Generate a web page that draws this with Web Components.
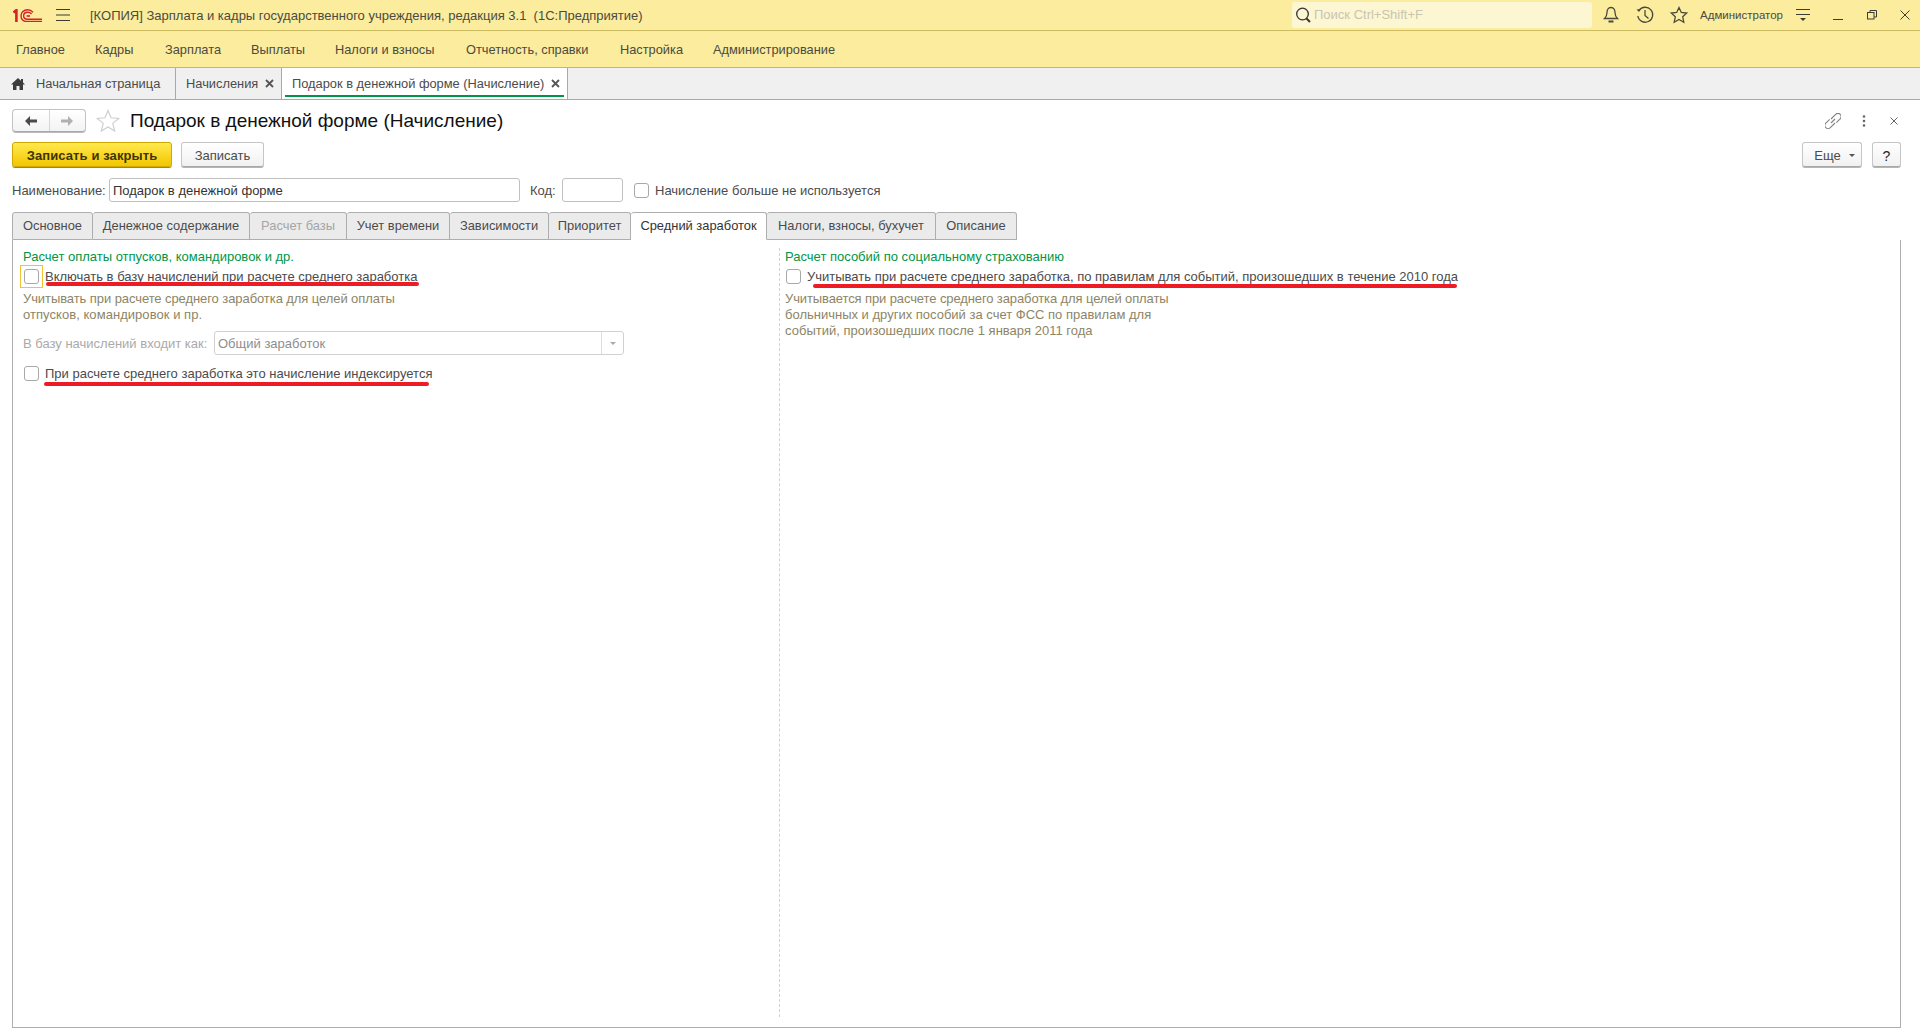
<!DOCTYPE html>
<html lang="ru"><head><meta charset="utf-8"><title>1С</title>
<style>
html,body{margin:0;padding:0;height:1033px;width:1920px;overflow:hidden;background:#fff}
body{display:flex;flex-direction:column;font:13px/16px "Liberation Sans",Arial,sans-serif;color:#4b4b4b}
</style></head><body>
<x-titlebar></x-titlebar>
<x-menubar>
<x-menuitem style="width:79px">Главное</x-menuitem><x-menuitem style="width:70px">Кадры</x-menuitem><x-menuitem style="width:86px">Зарплата</x-menuitem><x-menuitem style="width:84px">Выплаты</x-menuitem><x-menuitem style="width:131px">Налоги и взносы</x-menuitem><x-menuitem style="width:154px">Отчетность, справки</x-menuitem><x-menuitem style="width:93px">Настройка</x-menuitem><x-menuitem>Администрирование</x-menuitem>
</x-menubar>
<x-pagetabs>
<x-pagetab style="width:176px" home>Начальная страница</x-pagetab>
<x-pagetab style="width:106px" closable>Начисления</x-pagetab>
<x-pagetab style="width:286px" closable active>Подарок в денежной форме (Начисление)</x-pagetab>
</x-pagetabs>
<x-form>
<x-headrow slot="head">Подарок в денежной форме (Начисление)</x-headrow>
<x-cmdrow slot="cmd">
  <x-btn primary style="width:160px">Записать и закрыть</x-btn>
  <x-btn style="width:83px;margin-left:9px">Записать</x-btn>
  <x-spacer></x-spacer>
  <x-btn style="width:60px;padding-left:5px">Еще<x-caret></x-caret></x-btn>
  <x-btn style="width:29px;margin-left:10px;color:#222;font-size:14px">?</x-btn>
</x-cmdrow>
<x-fieldrow slot="fields">
  <x-label style="width:97px">Наименование:</x-label>
  <x-input style="width:411px">Подарок в денежной форме</x-input>
  <x-label style="width:32px;margin-left:10px">Код:</x-label>
  <x-input style="width:61px"></x-input>
  <x-check inline style="margin:5px 0 0 11px;height:19px">Начисление больше не используется</x-check>
</x-fieldrow>
<x-tabstrip slot="tabs">
  <x-tab style="width:81px">Основное</x-tab>
  <x-tab style="width:157px">Денежное содержание</x-tab>
  <x-tab style="width:97px" disabled>Расчет базы</x-tab>
  <x-tab style="width:103px">Учет времени</x-tab>
  <x-tab style="width:99px">Зависимости</x-tab>
  <x-tab style="width:82px">Приоритет</x-tab>
  <x-tab style="width:136px" active>Средний заработок</x-tab>
  <x-tab style="width:169px">Налоги, взносы, бухучет</x-tab>
  <x-tab style="width:81px">Описание</x-tab>
</x-tabstrip>
<x-panel slot="panel">
  <x-col slot="left" style="padding-left:10px">
    <x-heading>Расчет оплаты отпусков, командировок и др.</x-heading>
    <x-check focus mark-left="23" mark-width="373" mark-top="17">Включать в базу начислений при расчете среднего заработка</x-check>
    <x-note><x-line style="letter-spacing:-.08px">Учитывать при расчете среднего заработка для целей оплаты</x-line><x-line style="letter-spacing:.05px">отпусков, командировок и пр.</x-line></x-note>
    <x-selectrow>В базу начислений входит как:</x-selectrow>
    <x-check style="margin-top:7px" mark-left="21" mark-width="385" mark-top="20">При расчете среднего заработка это начисление индексируется</x-check>
  </x-col>
  <x-col slot="right" style="padding-left:5px">
    <x-heading>Расчет пособий по социальному страхованию</x-heading>
    <x-check mark-left="28" mark-width="644" mark-top="19">Учитывать при расчете среднего заработка, по правилам для событий, произошедших в течение 2010 года</x-check>
    <x-note><x-line style="letter-spacing:-.11px">Учитывается при расчете среднего заработка для целей оплаты</x-line><x-line>больничных и других пособий за счет ФСС по правилам для</x-line><x-line style="letter-spacing:.02px">событий, произошедших после 1 января 2011 года</x-line></x-note>
  </x-col>
</x-panel>
</x-form>
<script>
function def(name, css, html, extra){
  customElements.define(name, class extends HTMLElement{
    constructor(){super();const r=this.attachShadow({mode:'open'});
      r.innerHTML='<style>'+css+'</style>'+html;}
    connectedCallback(){ if(extra) extra(this,this.shadowRoot); }
  });
}
const ic='stroke="#4a4a3c" fill="none" stroke-width="1.3"';
def('x-titlebar',`:host{display:flex;align-items:center;height:30px;border-bottom:1px solid #cdbb62;background:#fbec9e;padding-left:13px;color:#4b4b3f;flex:none}
 .logo{width:29px;height:13px;flex:none}.burger{width:14px;height:12px;margin-left:14px;flex:none}
 .t{margin-left:20px;flex:1;white-space:nowrap;padding-top:1px}
 .s{width:300px;height:26px;border-radius:3px;background:#fdf6d3;display:flex;align-items:center;box-sizing:border-box;padding-left:3px;color:#c9c5ae;flex:none}
 .s svg{margin-right:2px}
 .i{width:22px;height:22px;margin-left:12px;flex:none}.i.f{margin-left:8px}
 .a{margin-left:10px;width:82px;font-size:11.500px;white-space:nowrap;flex:none}
 .m{width:14px;height:14px;margin-left:14px;flex:none}
 .w{width:10px;height:10px;flex:none}
 `,`<svg class="logo" viewBox="0 0 29 13"><g fill="none" stroke="#d8202a"><path d="M0.5 3.6 3.4 1.2V13" stroke-width="2.6"/><path d="M20 3.2C18.5 1.6 16.6 .8 14.6 .8 10.8 .8 8 3.4 8 6.9 8 10.4 10.8 13 14.6 12.4H29" stroke-width="1.4"/><path d="M18.6 5C17.7 4 16.2 3.3 14.8 3.3 12.2 3.3 10.6 4.9 10.6 6.9 10.6 8.9 12.2 10.3 14.8 10.2H29" stroke-width="1.4"/><path d="M17 7H13.6" stroke-width="1.6"/></g></svg>
 <svg class="burger" viewBox="0 0 14 12" stroke="#3c3c34" stroke-width="1.1"><path d="M0 .5H14M0 6H14M0 11.5H14"/></svg>
 <div class="t">[КОПИЯ] Зарплата и кадры государственного учреждения, редакция 3.1&nbsp; (1С:Предприятие)</div>
 <div class="s"><svg width="17" height="18" viewBox="0 0 17 18" fill="none" stroke="#333"><circle cx="7.5" cy="8" r="5.8" stroke-width="1.3"/><path d="M11.5 12.5 15 16" stroke-width="2"/></svg><span>Поиск Ctrl+Shift+F</span></div>
 <svg class="i f" viewBox="0 0 22 22" ${ic}><path d="M11 3.5c-3 0-4 2.400-4 5 0 3-1 4.500-2.500 6h13C16 13 15 11.500 15 8.500c0-2.600-1-5-4-5z"/><path d="M8.500 17.500h5" stroke-width="2"/></svg>
 <svg class="i" viewBox="0 0 22 22" ${ic}><path d="M5 6.500A7.500 7.500 0 1 1 3.800 12"/><path d="M2.500 5.500 5 8l2-3" fill="#4a4a3c" stroke="none"/><path d="M11 6v5.500l3.500 3"/></svg>
 <svg class="i" viewBox="0 0 22 22" ${ic}><path d="M11 3.500l2.300 5 5.400.6-4 3.700 1.100 5.400-4.800-2.700-4.800 2.700 1.100-5.400-4-3.700 5.400-.6z"/></svg>
 <div class="a">Администратор</div>
 <svg class="m" viewBox="0 0 14 14" stroke="#3c3c34"><path d="M0 1.500H14M0 6.500H14"/><path d="M4 10h6l-3 3z" fill="#3c3c34" stroke="none"/></svg>
 <svg class="w" style="margin-left:23px" viewBox="0 0 10 10" stroke="#3c3c34"><path d="M0 9.500H10"/></svg>
 <svg class="w" style="margin-left:24px" viewBox="0 0 10 10" stroke="#3c3c34" fill="none"><rect x=".5" y="2.500" width="6.500" height="6.500"/><path d="M3 2.500V.5H9.500V7H7"/></svg>
 <svg class="w" style="margin:0 10px 0 23px" viewBox="0 0 10 10" stroke="#3c3c34"><path d="M.5.5 9.500 9.500M9.500.5.5 9.500"/></svg>`);
def('x-menubar',`:host{display:flex;align-items:center;box-sizing:border-box;height:37px;padding-top:1px;background:#fbec9e;border-bottom:1px solid #c9b963;padding-left:16px;flex:none;font-size:12.800px}`,`<slot></slot>`);
def('x-menuitem',`:host{display:block;white-space:nowrap;flex:none;color:#4b4b3f}`,`<slot></slot>`);
def('x-pagetabs',`:host{display:flex;height:31px;background:#f0f0f0;border-bottom:1px solid #a9a9a9;flex:none;font-size:12.850px}`,`<slot></slot>`);
def('x-pagetab',`:host{display:flex;align-items:center;box-sizing:border-box;border-right:1px solid #a9a9a9;position:relative;white-space:nowrap;flex:none;padding:0 10px;color:#4b4b4b}
 svg.h{width:14px;height:14px;margin-right:11px;margin-left:1px;flex:none}
 .x{margin-left:auto;margin-right:-3px;width:9px;height:9px;display:none;flex:none}
 :host([closable]) .x{display:block}
 :host([active]){background:#fff}
 :host([active]) .u{display:block}
 .u{display:none;position:absolute;left:3px;right:3px;bottom:2px;height:2px;background:#009646}
 .home{display:none}:host([home]) .home{display:block}`,
 `<svg class="h home" viewBox="0 0 14 14" fill="#3c3c3c"><path d="M7 1 0 7.500h2V13h3.500V9h3v4H12V7.500h2l-2-1.900V2h-2v1.700z"/></svg><slot></slot><svg class="x" viewBox="0 0 9 9" stroke="#555" stroke-width="1.800"><path d="M1 1 8 8M8 1 1 8"/></svg><div class="u"></div>`);
def('x-form',`:host{display:flex;flex-direction:column;flex:1;min-height:0;padding:9px 19px 5px 12px}
 ::slotted([slot=cmd]){margin-top:10px}::slotted([slot=fields]){margin-top:10px}::slotted([slot=tabs]){margin-top:10px}::slotted([slot=panel]){flex:1;min-height:0}`,
 `<slot name="head"></slot><slot name="cmd"></slot><slot name="fields"></slot><slot name="tabs"></slot><slot name="panel"></slot>`);
def('x-headrow',`:host{display:flex;align-items:center;height:23px;flex:none}
 .nav{display:flex;width:74px;height:23px;box-sizing:border-box;border:1px solid #c2c2c2;border-bottom-color:#a8a8a8;border-radius:4px;background:linear-gradient(#fff,#f3f3f3);box-shadow:0 1px 0 #bbb;flex:none}
 .nav div{flex:1;display:flex;align-items:center;justify-content:center}.nav div+div{border-left:1px solid #d6d6d6}
 .star{width:24px;height:23px;margin-left:10px;flex:none}
 .t{margin-left:10px;font-size:19px;line-height:23px;color:#111;flex:1;white-space:nowrap}
 .ic{width:16px;height:16px;flex:none}`,
 `<div class="nav"><div><svg width="14" height="10" viewBox="0 0 14 10"><path d="M6 0 1 5l5 5V6.500h7v-3H6z" fill="#4a4a4a"/></svg></div><div><svg width="14" height="10" viewBox="0 0 14 10"><path d="M8 0l5 5-5 5V6.500H1v-3h7z" fill="#b0b0b0"/></svg></div></div>
 <svg class="star" viewBox="0 0 24 23" fill="none" stroke="#cfcfcf" stroke-width="1.200"><path d="M12 1.500l3 7.300 7.800.6-6 5 1.900 7.600-6.700-4.100-6.700 4.100 1.900-7.600-6-5 7.800-.6z"/></svg>
 <div class="t"><slot></slot></div>
 <svg class="ic" viewBox="2 2 12 12" fill="none" stroke="#808080" stroke-width=".8"><path d="M6.500 6.500 10 3a2.400 2.400 0 0 1 3.400 3.400L10.500 9.300"/><path d="M9.500 9.500 6 13a2.400 2.400 0 0 1-3.400-3.400L5.500 6.700"/><path d="M6.500 9.500 9.500 6.500"/></svg>
 <svg class="ic" style="margin-left:15px" viewBox="0 0 16 16" fill="#666"><circle cx="8" cy="3.500" r="1.300"/><circle cx="8" cy="8" r="1.300"/><circle cx="8" cy="12.500" r="1.300"/></svg>
 <svg class="ic" style="margin-left:14px;margin-right:-1px" viewBox="0 0 16 16" stroke="#666"><path d="M4.500 4.500 11.500 11.500M11.500 4.500 4.500 11.500"/></svg>`);
def('x-cmdrow',`:host{display:flex;height:26px;flex:none}`,`<slot></slot>`);
def('x-spacer',`:host{display:block;flex:1}`,``);
def('x-btn',`:host{display:flex;align-items:center;justify-content:center;box-sizing:border-box;height:25px;padding-top:2px;border:1px solid #c6c6c6;border-bottom-color:#a8a8a8;border-radius:3px;background:linear-gradient(#fff,#f1f1f1);box-shadow:0 1px 0 #b5b5b5;white-space:nowrap;flex:none;color:#4b4b4b}
 :host([primary]){background:linear-gradient(#ffe94e,#f3c600);border-color:#cfa900;box-shadow:0 1px 0 #a68a00;font-weight:bold;color:#3e3500;letter-spacing:.1px}`,`<slot></slot>`);
def('x-caret',`:host{display:inline-block;width:0;height:0;margin-left:8px;border:3px solid transparent;border-top:3px solid #555;border-bottom:0}`,``);
def('x-fieldrow',`:host{display:flex;align-items:center;height:24px;flex:none}`,`<slot></slot>`);
def('x-label',`:host{display:block;white-space:nowrap;flex:none;padding-top:1px}`,`<slot></slot>`);
def('x-input',`:host{display:flex;align-items:center;box-sizing:border-box;height:24px;border:1px solid #c0c0c0;border-radius:3px;padding:1px 0 0 3px;background:#fff;flex:none;white-space:nowrap;color:#333}`,`<slot></slot>`);
def('x-tabstrip',`:host{display:flex;height:28px;flex:none;position:relative;z-index:1;font-size:12.900px}`,`<slot></slot>`);
def('x-tab',`:host{display:flex;align-items:center;justify-content:center;box-sizing:border-box;height:28px;background:#ebebeb;border:1px solid #aeaeae;border-left:0;border-radius:3px 3px 0 0;white-space:nowrap;flex:none;color:#4b4b4b}
 :host(:first-child){border-left:1px solid #aeaeae}
 :host([disabled]){color:#a5a5a5}
 :host([active]){background:#fff;border-bottom-color:#fff;color:#333}`,`<slot></slot>`);
def('x-panel',`:host{display:grid;grid-template-columns:766px 1fr;box-sizing:border-box;border:1px solid #aeaeae;border-top:0;padding:8px 0 10px;margin-top:0;position:relative}
 .r{border-left:1px dashed #d2d2d2}`,`<div><slot name="left"></slot></div><div class="r"><slot name="right"></slot></div>`);
def('x-col',`:host{display:block;position:relative;padding-top:1px}`,`<slot></slot>`);
def('x-heading',`:host{display:block;color:#009646;white-space:nowrap}`,`<slot></slot>`);
def('x-note',`:host{display:block;color:#8d8566;margin-top:2px;white-space:nowrap}`,`<slot></slot>`);
def('x-line',`:host{display:block}`,`<slot></slot>`);
def('x-check',`:host{display:flex;align-items:flex-start;height:24px;position:relative;white-space:nowrap;flex:none}
 .b{box-sizing:border-box;width:15px;height:15px;border:1px solid #a8a8a8;border-radius:3px;margin:4px 6px 0 1px;background:#fff;flex:none;position:relative}
 :host([focus]) .b::after{content:"";position:absolute;left:-5px;top:-5px;width:23px;height:23px;box-sizing:border-box;border:1px solid #f2c230}
 .l{margin-top:4px}
 :host([inline]) .b{margin:0 6px 0 0}
 :host([inline]) .l{margin-top:0}
 .mk{position:absolute;height:4px;border-radius:2px;background:#ed1c24;display:none}`,
 `<div class="b"></div><div class="l"><slot></slot></div><div class="mk"></div>`,
 (el,r)=>{ if(el.hasAttribute('mark-left')){const m=r.querySelector('.mk');m.style.display='block';m.style.left=el.getAttribute('mark-left')+'px';m.style.width=el.getAttribute('mark-width')+'px';m.style.top=el.getAttribute('mark-top')+'px';} });
def('x-selectrow',`:host{display:flex;align-items:center;margin-top:8px;height:24px;color:#aaa;white-space:nowrap}
 .lb{width:191px;flex:none;padding-top:1px}
 .sel{display:flex;width:410px;height:24px;box-sizing:border-box;border:1px solid #d2d2d2;border-radius:3px;color:#8e8e8e;align-items:center}
 .v{flex:1;padding:1px 0 0 3px}.c{width:21px;height:22px;border-left:1px solid #dcdcdc;display:flex;align-items:center;justify-content:center}
 .c i{width:0;height:0;border:3px solid transparent;border-top-color:#aaa;border-bottom:0}`,
 `<div class="lb"><slot></slot></div><div class="sel"><div class="v">Общий заработок</div><div class="c"><i></i></div></div>`);
</script>
</body></html>
